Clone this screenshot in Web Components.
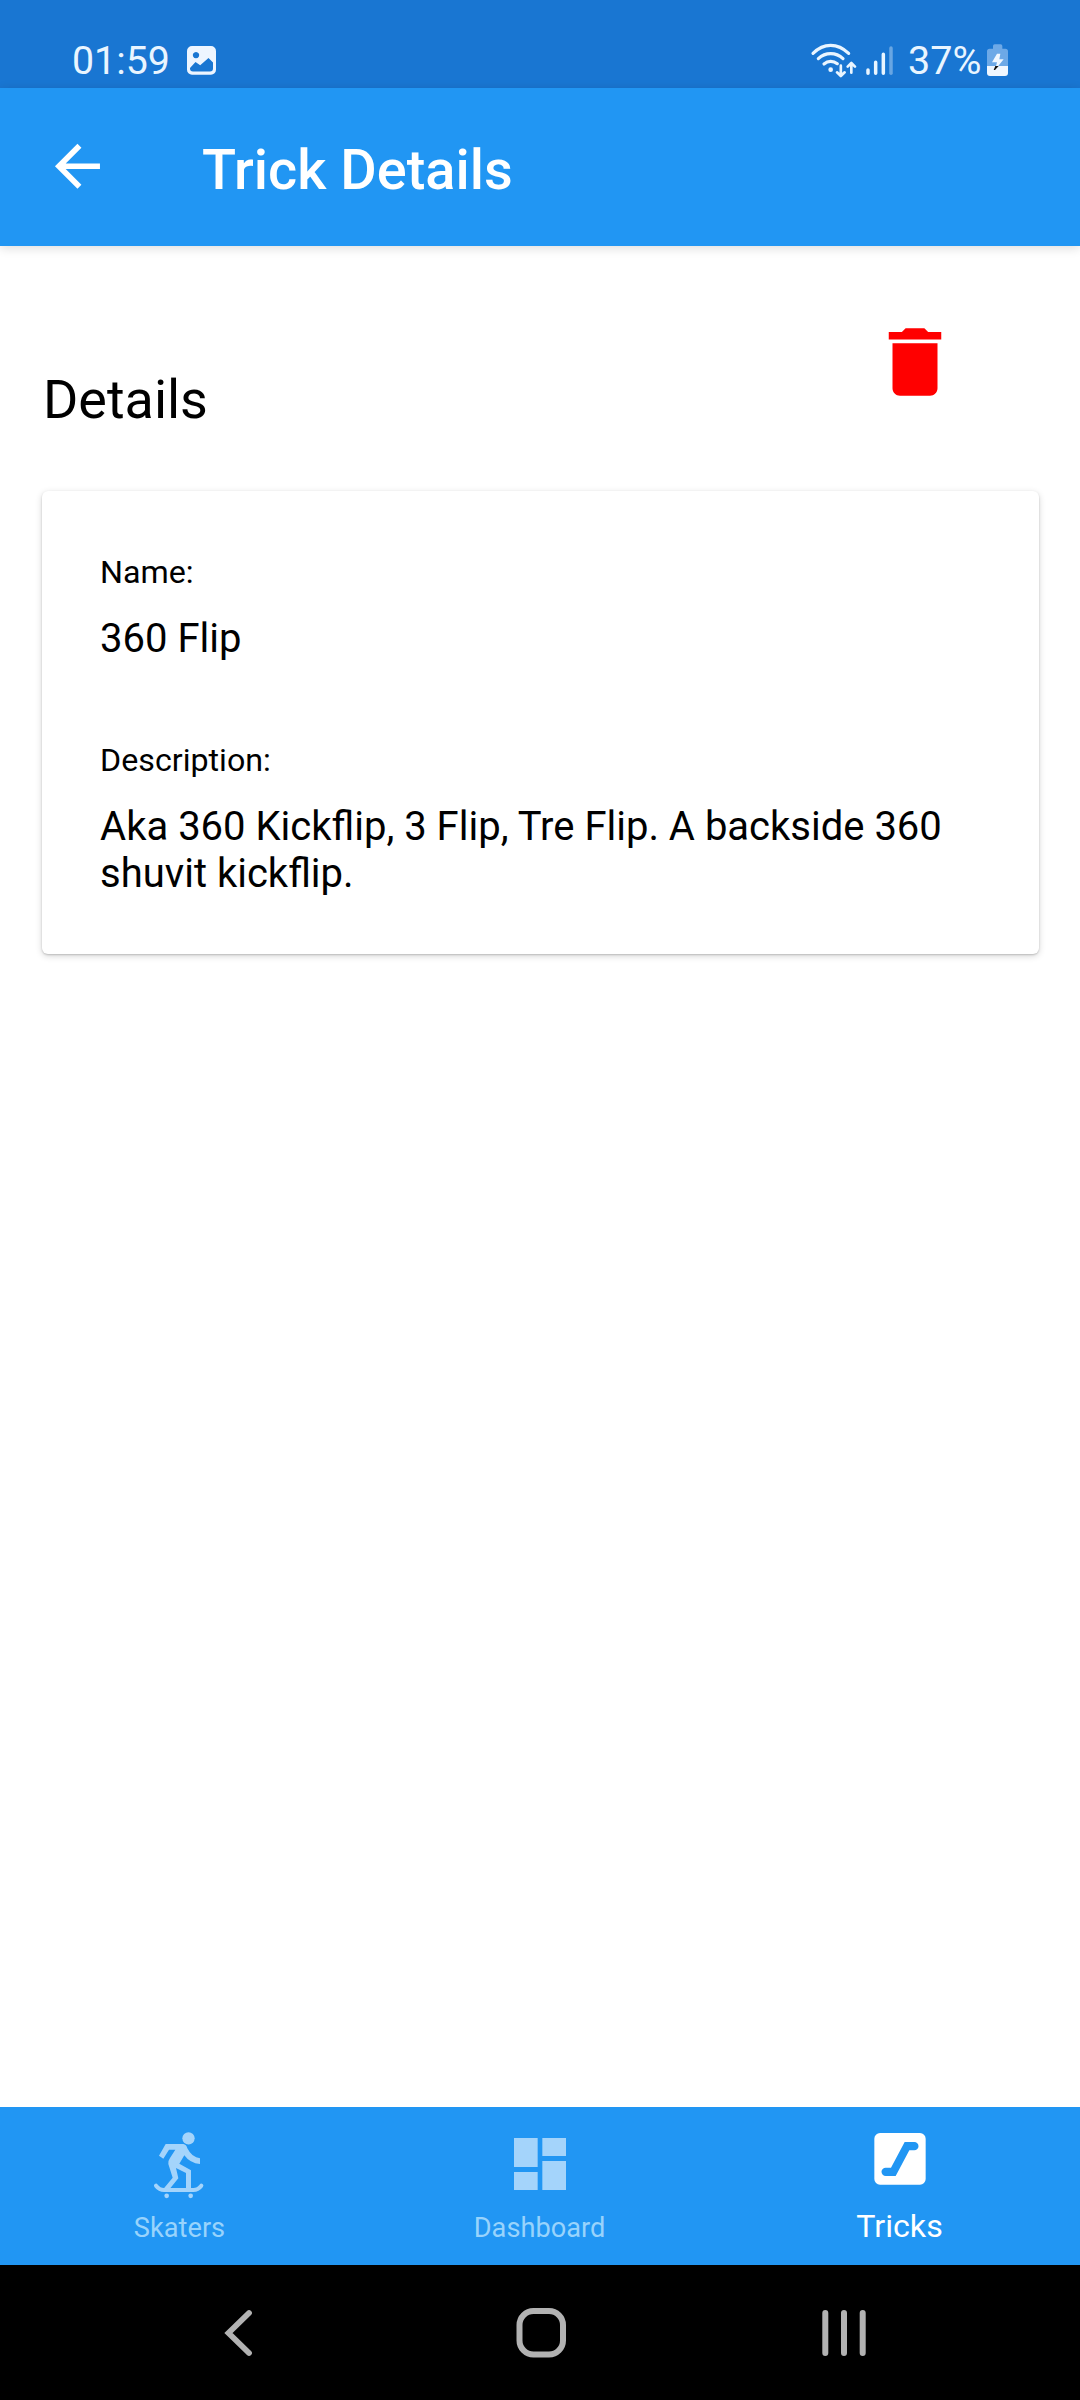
<!DOCTYPE html>
<html lang="en">
<head>
<meta charset="utf-8">
<title>Trick Details</title>
<style>
html,body{margin:0;padding:0;background:#fff}
body{font-family:Roboto,"Liberation Sans",sans-serif;color:#000}
</style>
</head>
<body>
<trick-app></trick-app>
<script>
const define = (name, html) => customElements.define(name, class extends HTMLElement {
  constructor() {
    super();
    const t = document.createElement('template');
    t.innerHTML = html;
    this.attachShadow({mode: 'open'}).appendChild(t.content.cloneNode(true));
  }
});

define('status-bar', `
<style>
:host{display:flex;height:88px;background:#1976d2;color:#e9f5ff;font-size:39.500px;line-height:48px}
svg{display:block;flex:none}
span{display:block;padding-top:37px;white-space:nowrap}
.time{margin-left:72px;width:108px;font-size:39.300px}
.battery{width:74px}
.gap{flex:1}
</style>
<span class="time">01:59</span>
<svg width="44" height="88" viewBox="180 0 44 88"><path fill="#edf5ff" fill-rule="evenodd" d="M192 46h19a5 5 0 0 1 5 5v18.700a5 5 0 0 1-5 5h-19a5 5 0 0 1-5-5V51a5 5 0 0 1 5-5zM196 51.900a3.200 3.200 0 1 0 .01 0zM190 68l5.500-6 4.700 3.200 8.300-7.200 4.500 4.500v6q0 3-3 3h-17q-3 0-3-3z"/></svg>
<div class="gap"></div>
<svg width="104" height="88" viewBox="804 0 104 88"><g transform="translate(780 20) scale(.33333)" fill="none" stroke="#e9f5ff" stroke-linecap="round" stroke-linejoin="round">
<g stroke-width="9.500"><path d="M99 100Q123 76 152 76T206 100"/><path d="M115 116Q131 101 152 101T189 116"/><path d="M132 132Q141 124 152 124T172 131"/></g>
<circle cx="152" cy="149" r="7" fill="#e9f5ff" stroke="none"/>
<path stroke-width="8" d="M182.500 137V167M171 157l11.500 11 11.500-11M214 158V130M203 140l11-11 11 11"/>
<g stroke-width="10.500"><path d="M264 150V160M287 127V160M310 103V160"/><path opacity=".38" d="M333 84V160"/></g></g></svg>
<span class="battery">37%</span>
<svg width="98" height="88" viewBox="982 0 98 88"><g transform="translate(780 20) scale(.33333)">
<path fill="#6da9e7" d="M639 86v-8q0-5 5-5h18q5 0 5 5v8h9q8 0 8 8v45h-63V94q0-8 8-8z"/>
<path fill="#f0f7ff" d="M621 138h63v21q0 9-9 9h-45q-9 0-9-9z"/>
<path fill="#f0f7ff" d="M651 101h10l-3 17h13l-17 21h-6l3-12h-15z"/><path fill="#111" d="M646 138h10l-11 12h-4z"/></g></svg>`);

define('app-bar', `
<style>
:host{display:flex;height:158px;background:#2196f3;color:#fff;position:relative;box-shadow:0 2px 10px rgba(0,0,0,.14)}
svg{display:block;flex:none}
h1{margin:0;padding:48.500px 0 0 42px;font-size:55.900px;line-height:66px;font-weight:500;white-space:nowrap}
</style>
<svg width="160" height="158" viewBox="0 88 160 158"><path fill="#fff" transform="translate(43.700 132.500) scale(2.8125)" d="M20 11H7.830l5.590-5.590L12 4l-8 8 8 8 1.410-1.410L7.830 13H20v-2z"/></svg>
<h1><slot></slot></h1>`);

define('section-header', `
<style>
:host{display:flex;height:244.500px;justify-content:space-between}
h2{margin:0;padding:121px 0 0 43px;font-size:53.900px;line-height:66px;font-weight:400}
svg{display:block;margin:70.800px 120px 0 0}
</style>
<h2><slot></slot></h2>
<svg width="90" height="90" viewBox="0 0 24 24" fill="red"><path d="M6 19c0 1.100.9 2 2 2h8c1.100 0 2-.9 2-2V7H6v12zM19 4h-3.500l-1-1h-5l-1 1H5v2h14V4z"/></svg>`);

define('detail-card', `
<style>
:host{display:block;box-sizing:border-box;margin:0 41px 0 42.400px;height:463px;padding:61.500px 50px 0 57.700px;border-radius:6px;background:#fff;box-shadow:0 1px 2px rgba(0,0,0,.18),0 2px 7px rgba(0,0,0,.16)}
</style><slot></slot>`);

define('detail-field', `
<style>
:host{display:block;margin-bottom:77.500px}
.label{font-size:32.200px;line-height:40px}
.value{font-size:40px;line-height:47px;margin-top:23.300px}
</style>
<div class="label"><slot name="label"></slot></div>
<div class="value"><slot></slot></div>`);

define('tab-item', `
<style>
:host{display:flex;flex:1;flex-direction:column;align-items:center;color:#98d3fc;font-size:27.200px}
:host([active]){color:#fff;font-size:32.200px}
.label{line-height:40px;margin:.8px 1px 0 0}
::slotted(svg){display:block;flex:none}
</style>
<slot name="icon"></slot><div class="label"><slot></slot></div>`);

define('tab-bar', `
<style>:host{display:flex;height:157.700px;background:#2196f3}</style><slot></slot>`);

define('system-nav', `
<style>:host{display:block;height:135.300px;background:#000}svg{display:block}</style>
<svg width="1080" height="135" viewBox="0 2265 1080 135" fill="none" stroke="#b2b2b2" stroke-linecap="round">
<path stroke-width="5.800" stroke-linejoin="miter" d="M249 2313L228.500 2333 249 2353"/>
<rect x="519.500" y="2311" width="43.500" height="43.500" rx="14" stroke-width="6"/>
<path stroke-width="6" d="M825.300 2313V2353M844 2313V2353M862.700 2313V2353"/></svg>`);

define('trick-app', `
<style>:host{display:flex;flex-direction:column;width:1080px;height:2400px;overflow:hidden}main{flex:1}</style>
<status-bar></status-bar>
<app-bar>Trick Details</app-bar>
<main>
<section-header>Details</section-header>
<detail-card>
<detail-field><span slot="label">Name:</span>360 Flip</detail-field>
<detail-field><span slot="label">Description:</span>Aka 360 Kickflip, 3 Flip, Tre Flip. A backside 360 shuvit kickflip.</detail-field>
</detail-card>
</main>
<tab-bar>
<tab-item><svg slot="icon" width="100" height="100" viewBox="90 51 300 300" fill="#a4d4fb"><circle cx="265.500" cy="145" r="18.500"/><path d="M197 162H250Q259 163 262 175Q276 203 300 205V222Q270 220 253 196L238 221 273 241V297H258V249L228 234 235 265 209 297H190L218 263 205 222Q204 212 210 204L226 179H207L190 206 177 197Z"/><path d="M168 287Q178 300 192 300H280Q294 300 304 287" fill="none" stroke="#a4d4fb" stroke-width="12" stroke-linecap="round"/><circle cx="200" cy="317.500" r="7"/><circle cx="272" cy="317.500" r="7"/></svg>Skaters</tab-item>
<tab-item><svg slot="icon" width="100" height="100" viewBox="150 51 300 300" fill="#a4d4fb"><path d="M222 144h71v87h-71zM307 144h71v54h-71zM222 246h71v54h-71zM307 213h71v87h-71z"/></svg>Dashboard</tab-item>
<tab-item active><svg slot="icon" width="100" height="98" viewBox="210 51 300 294" fill="#fff"><path fill-rule="evenodd" d="M300 129H420a17 17 0 0 1 17 17V267a17 17 0 0 1-17 17H300a17 17 0 0 1-17-17V146a17 17 0 0 1 17-17zM317 233H333L374 156H403a12.500 12.500 0 0 1 0 25H388L347 258H317a12.500 12.500 0 0 1 0-25z"/></svg>Tricks</tab-item>
</tab-bar>
<system-nav></system-nav>`);
</script>
</body>
</html>
